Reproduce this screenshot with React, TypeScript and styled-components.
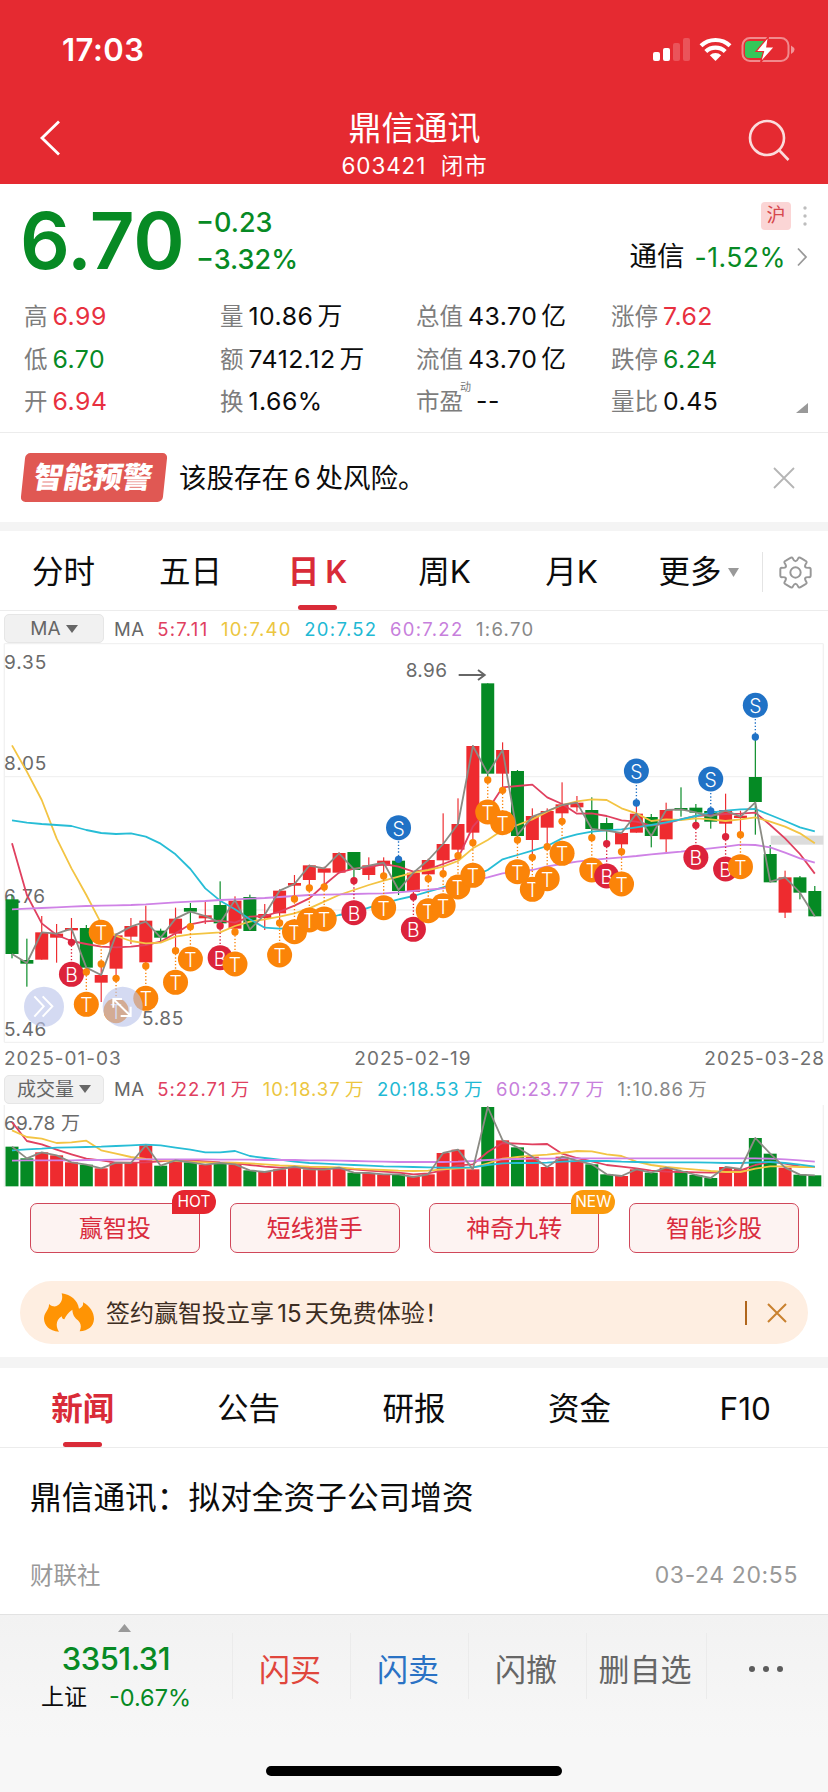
import React from 'react';
import styled, { createGlobalStyle } from 'styled-components';

const GlobalStyle = createGlobalStyle`
  * { box-sizing: border-box; }
  body {
    margin: 0;
    background: #fff;
    font-family: Inter, "Noto Sans CJK SC", sans-serif;
    color: #0c0c0c;
  }
`;

const RED = '#e52a31';
const GREEN = '#078a24';
const GREY = '#7d7d7d';

/* ---------- shared ---------- */

const Screen = styled.main`
  width: 828px;
  height: 1792px;
  display: flex;
  flex-direction: column;
  overflow: hidden;
  background: #fff;
`;

const Label = styled.span<{ $size: number; $color?: string; $weight?: number; $spacing?: number }>`
  font-size: ${p => p.$size}px;
  line-height: 1;
  color: ${p => p.$color ?? 'inherit'};
  font-weight: ${p => p.$weight ?? 400};
  letter-spacing: ${p => p.$spacing ?? 0}px;
  white-space: nowrap;
`;

const Band = styled.div<{ $height: number }>`
  height: ${p => p.$height}px;
  flex: none;
  background: #f4f4f4;
`;

/* ---------- header ---------- */

const Header = styled.header`
  height: 184px;
  flex: none;
  background: ${RED};
  color: #fff;
  display: flex;
  flex-direction: column;
`;

const StatusBar = styled.div`
  height: 99px;
  padding: 0 32px 0 62px;
  display: flex;
  justify-content: space-between;
  align-items: center;
`;

const TitleBar = styled.div`
  height: 85px;
  padding: 0 38px 0 39px;
  display: grid;
  grid-template-columns: 1fr auto 1fr;
`;

const TitleStack = styled.div`
  display: flex;
  flex-direction: column;
  align-items: center;
  gap: 10px;
  padding-top: 13px;
`;

const BackIcon = styled.svg`
  margin-top: 20px;
`;

const SearchIcon = styled.svg`
  margin-top: 20px;
  justify-self: end;
`;

/* ---------- quote ---------- */

const Quote = styled.section`
  height: 249px;
  flex: none;
  border-bottom: 1px solid #ececec;
  padding: 0 20px 0 22px;
`;

const PriceRow = styled.div`
  height: 110px;
  display: flex;
`;

const Price = styled.div`
  width: 174px;
  margin-left: -2px;
  padding-top: 18px;
  font-size: 78px;
  line-height: 78px;
  font-weight: 600;
  letter-spacing: -0.4px;
  color: ${GREEN};
  white-space: nowrap;
`;

const Changes = styled.div`
  display: flex;
  flex-direction: column;
  gap: 10px;
  padding: 25px 0 0 2px;
  flex: 1;
`;

const Sector = styled.div`
  display: flex;
  flex-direction: column;
  align-items: flex-end;
  gap: 12px;
  padding-top: 18px;
`;

const SectorTop = styled.div`
  display: flex;
  align-items: center;
  gap: 11px;
`;

const SectorLine = styled.div`
  display: flex;
  align-items: center;
  height: 30px;
  gap: 10px;
`;

const MarketBadge = styled.span`
  width: 30px;
  height: 28px;
  border-radius: 4px;
  background: #fbd5d5;
  color: #d6474c;
  font-size: 19px;
  line-height: 27px;
  text-align: center;
`;

const Stats = styled.div`
  display: grid;
  grid-template-columns: 196px 196px 195px 1fr;
  grid-auto-rows: 42.5px;
  padding: 1.5px 0 0 2px;
`;

const Stat = styled.div`
  display: flex;
  align-items: center;
  gap: 5px;
`;

const StatValue = styled.span<{ $color?: string }>`
  font-size: 24.8px;
  line-height: 1;
  letter-spacing: 0.5px;
  word-spacing: -3.5px;
  color: ${p => p.$color ?? 'inherit'};
  white-space: nowrap;
`;

const Superscript = styled.sup`
  font-size: 11px;
  line-height: 1;
  color: #777;
  align-self: flex-start;
  margin: 1px 0 0 -8px;
`;

const Corner = styled.svg`
  margin: 13px 0 0 auto;
`;

/* ---------- alert ---------- */

const Alert = styled.section`
  height: 89px;
  flex: none;
  padding: 0 33px 0 21px;
  display: flex;
  align-items: center;
`;

const AlertBadge = styled.div`
  width: 142px;
  height: 49px;
  margin: 0 14px 0 2px;
  border-radius: 5px;
  transform: skewX(-6deg);
  background: #e05853;
  color: #fff;
  display: flex;
  align-items: center;
  justify-content: center;
`;

const AlertName = styled.span`
  transform: skewX(-4deg);
  font-size: 29.5px;
  font-weight: 900;
  line-height: 1;
  padding-right: 1px;
`;

const AlertText = styled.p`
  margin: 0;
  padding-top: 2px;
  flex: 1;
  font-size: 27.5px;
  line-height: 1;
  word-spacing: -3px;
`;

/* ---------- chart tabs ---------- */

const PeriodTabs = styled.nav`
  height: 80px;
  flex: none;
  display: flex;
  border-bottom: 1px solid #ececec;
`;

const Period = styled.button<{ $active?: boolean }>`
  width: 127px;
  height: 79px;
  padding: 8px 0 0;
  border: 0;
  background: none;
  font: inherit;
  font-size: 31.5px;
  line-height: 1;
  font-weight: ${p => (p.$active ? 600 : 400)};
  color: ${p => (p.$active ? '#d92b38' : '#0c0c0c')};
  display: grid;
  grid-template-rows: 1fr 5px;
  justify-items: center;
  align-items: center;

  &::after {
    content: '';
    width: 39px;
    height: 5px;
    border-radius: 3px;
    background: ${p => (p.$active ? '#d92b38' : 'transparent')};
  }
`;

const PeriodName = styled.span`
  display: flex;
  align-items: center;
  gap: 6px;
  white-space: pre;
  word-spacing: -2px;
`;

const GearCell = styled.div`
  width: 66px;
  height: 40px;
  margin-top: 21px;
  border-left: 1px solid #e4e4e4;
  display: flex;
  align-items: center;
  justify-content: center;
`;

/* ---------- indicator rows ---------- */

const Indicators = styled.div<{ $pad: number }>`
  height: 32px;
  flex: none;
  padding: ${p => p.$pad}px 0 0 4px;
  display: flex;
  align-items: center;
`;

const Picker = styled.button`
  width: 100px;
  height: 29px;
  padding: 0;
  border: 1px solid #e6e6e6;
  border-radius: 5px;
  background: #f1f1f1;
  color: #666;
  font: inherit;
  font-size: 19px;
  line-height: 1;
  display: flex;
  align-items: center;
  justify-content: center;
  gap: 5px;
`;

const Legend = styled.div`
  margin-left: 10px;
  padding-top: 1px;
  display: flex;
  gap: 12.5px;
  word-spacing: -2px;
`;

const Dates = styled.div`
  height: 30px;
  flex: none;
  padding: 0 3px 0 4px;
  display: flex;
  justify-content: space-between;
  align-items: center;
`;

const Plot = styled.svg`
  display: block;
  flex: none;
`;

/* ---------- tools, banner ---------- */

const Tools = styled.div`
  height: 93px;
  flex: none;
  padding: 15px 29px 0 30px;
  display: grid;
  grid-template-columns: repeat(4, 170px);
  justify-content: space-between;
`;

const Tool = styled.button`
  position: relative;
  height: 50px;
  padding: 1px 0 0;
  border: 1.5px solid #d0475a;
  border-radius: 7px;
  background: #fdf3f2;
  color: #d92b3c;
  font: inherit;
  font-size: 24px;
  line-height: 1;
`;

const Tag = styled.span<{ $bg: string }>`
  position: absolute;
  top: -14px;
  right: -17px;
  width: 44px;
  height: 24px;
  border-radius: 12px 12px 12px 0;
  background: ${p => p.$bg};
  color: #fff;
  font-size: 15.5px;
  line-height: 24px;
  font-weight: 400;
  text-align: center;
`;

const Banner = styled.section`
  height: 63px;
  flex: none;
  margin: 0 20px 13px;
  padding: 0 21px 0 24px;
  border-radius: 32px;
  background: #feeee1;
  display: flex;
  align-items: center;
`;

const BannerText = styled.p`
  margin: 0 0 0 12px;
  padding-top: 2px;
  flex: 1;
  font-size: 24px;
  line-height: 1;
  color: #3d2d22;
  word-spacing: -3.5px;
`;

const BannerRule = styled.i`
  width: 2px;
  height: 24px;
  margin-right: 20px;
  background: #b0661c;
`;

/* ---------- news ---------- */

const NewsTabs = styled.nav`
  height: 80px;
  flex: none;
  display: grid;
  grid-template-columns: repeat(5, 1fr);
  border-bottom: 1px solid #ececec;
`;

const NewsTab = styled(Period)`
  width: 100%;
`;

const NewsItem = styled.article`
  height: 166px;
  flex: none;
  padding: 34px 30px 0 30px;
`;

const NewsTitle = styled.h2`
  margin: 0 0 50px;
  font-size: 31.7px;
  line-height: 1;
  font-weight: 400;
`;

const NewsMeta = styled.div`
  display: flex;
  justify-content: space-between;
  align-items: center;
`;

/* ---------- bottom bar ---------- */

const BottomBar = styled.footer`
  flex: 1;
  border-top: 1px solid #e2e2e2;
  background: linear-gradient(#f2f2f2, #f7f7f7 70%);
  display: flex;
  flex-direction: column;
  justify-content: space-between;
  align-items: center;
  padding-bottom: 16px;
`;

const Actions = styled.div`
  width: 100%;
  display: grid;
  grid-template-columns: 232px 118px 118px 118px 120px 1fr;
`;

const IndexCell = styled.div`
  display: flex;
  flex-direction: column;
  align-items: center;
  padding-top: 9px;
`;

const IndexLine = styled.div`
  display: flex;
  gap: 22px;
  align-items: center;
  margin-top: 12px;
`;

const Arrow = styled.svg`
  margin: 0 0 11px 16px;
`;

const Action = styled.button<{ $color: string }>`
  height: 66px;
  margin-top: 18px;
  padding: 6px 3px 0 0;
  border: 0;
  border-left: 1px solid #ebebeb;
  background: none;
  color: ${p => p.$color};
  font: inherit;
  font-size: 31px;
  line-height: 1;
  white-space: nowrap;
  display: flex;
  align-items: center;
  justify-content: center;
`;

const HomeIndicator = styled.div`
  width: 296px;
  height: 10px;
  border-radius: 5px;
  background: #000;
`;

/* ---------- chart data: plot units are a third of a pixel ---------- */

const STEP = 44.6;
const X0 = 36;
const px = (i: number) => X0 + STEP * i;
const UP = '#ee2b2f';
const DOWN = '#058a24';

/* [direction, body top, body bottom, wick top, wick bottom] */
const candles: [string, number, number, number, number][] = [
  ['g', 778, 942, 765, 955], ['g', 960, 971, 896, 1040], ['r', 877, 959, 828, 959], ['r', 881, 893, 852, 968],
  ['r', 864, 871, 834, 905], ['g', 864, 983, 855, 996], ['r', 1005, 1028, 972, 1086], ['r', 886, 986, 880, 1014],
  ['r', 858, 890, 834, 912], ['r', 842, 967, 797, 975], ['g', 872, 893, 866, 905], ['r', 836, 881, 803, 930],
  ['g', 804, 815, 789, 858], ['r', 826, 835, 782, 852], ['g', 795, 850, 724, 858], ['r', 782, 866, 769, 876],
  ['g', 771, 873, 764, 873], ['r', 822, 834, 792, 870], ['r', 752, 820, 748, 845], ['r', 729, 737, 705, 775],
  ['r', 676, 720, 674, 742], ['r', 685, 698, 680, 740], ['r', 639, 698, 637, 700], ['g', 636, 690, 636, 720],
  ['r', 676, 705, 652, 720], ['r', 662, 677, 652, 708], ['g', 662, 753, 655, 765], ['r', 698, 756, 694, 770],
  ['r', 660, 703, 656, 715], ['r', 612, 661, 520, 700], ['r', 552, 629, 475, 645], ['r', 318, 578, 316, 608],
  ['g', 130, 401, 130, 420], ['r', 330, 401, 307, 450], ['g', 393, 588, 390, 600], ['r', 528, 600, 505, 652],
  ['r', 513, 563, 505, 620], ['r', 493, 520, 427, 543], ['r', 488, 502, 468, 515], ['g', 510, 567, 472, 590],
  ['g', 549, 570, 533, 610], ['r', 579, 613, 579, 635], ['r', 521, 578, 490, 578], ['g', 531, 588, 522, 622],
  ['r', 510, 598, 488, 637], ['g', 504, 511, 442, 530], ['g', 503, 518, 492, 556], ['g', 513, 545, 505, 566],
  ['r', 510, 551, 461, 590], ['r', 527, 534, 512, 583], ['g', 411, 486, 292, 584], ['g', 642, 727, 615, 727],
  ['r', 712, 818, 692, 834], ['g', 712, 758, 708, 778], ['g', 753, 829, 738, 829],
];

const closeLine = [942, 969, 877, 881, 866, 983, 1005, 884, 860, 845, 893, 836, 815, 828, 848, 780, 868, 824, 752, 732,
  677, 685, 640, 688, 677, 668, 750, 698, 660, 612, 552, 318, 400, 330, 585, 530, 513, 495, 488, 567, 572, 579, 521,
  588, 510, 508, 517, 530, 512, 530, 487, 725, 712, 758, 829];
const ma5 = [610, 765, 850, 885, 903, 912, 920, 922, 920, 915, 905, 880, 853, 844, 842, 848, 830, 828, 815, 797, 775,
  735, 698, 686, 682, 672, 680, 695, 688, 672, 655, 560, 510, 442, 438, 434, 472, 492, 521, 520, 528, 541, 545, 557,
  550, 538, 528, 525, 522, 521, 518, 555, 595, 642, 701];
const ma10 = [316, 395, 480, 595, 685, 765, 850, 888, 903, 910, 908, 890, 883, 880, 877, 858, 845, 838, 830, 820, 805,
  785, 765, 750, 735, 722, 710, 698, 690, 680, 663, 625, 600, 570, 555, 538, 515, 495, 484, 478, 480, 505, 520, 543,
  538, 540, 535, 538, 543, 538, 532, 545, 560, 580, 610];
const ma20 = [541, 548, 552, 555, 558, 570, 579, 582, 580, 590, 611, 643, 687, 745, 782, 808, 838, 863, 866, 864, 855,
  837, 825, 818, 803, 790, 778, 768, 755, 742, 728, 710, 690, 658, 645, 632, 618, 595, 583, 575, 571, 568, 562, 555,
  547, 538, 528, 518, 512, 508, 507, 525, 543, 562, 574];
const ma60 = [808, 806, 804, 802, 800, 798, 797, 796, 795, 793, 790, 787, 785, 783, 780, 778, 776, 774, 771, 768, 765,
  764, 763, 762, 761, 760, 757, 753, 749, 745, 734, 722, 712, 700, 695, 690, 679, 672, 665, 660, 656, 652, 648, 643,
  639, 635, 630, 625, 620, 614, 615, 622, 638, 655, 668];

/* [candle index, dot y, circle y, letter] */
const marks: [number, number, number, string][] = [
  [4, 907, 1003, 'B'], [5, 996, 1093, 'T'], [6, 972, 877, 'T'], [7, 1015, 1112, 'T'], [9, 978, 1075, 'T'],
  [11, 932, 1027, 'T'], [12, 860, 957, 'T'], [14, 858, 953, 'B'], [15, 876, 972, 'T'], [18, 849, 945, 'T'],
  [19, 777, 875, 'T'], [20, 744, 840, 'T'], [21, 741, 837, 'T'], [23, 722, 818, 'B'], [25, 708, 803, 'T'],
  [26, 658, 563, 'S'], [27, 771, 868, 'B'], [28, 716, 812, 'T'], [29, 701, 797, 'T'], [30, 647, 741, 'T'],
  [31, 608, 706, 'T'], [32, 420, 516, 'T'], [33, 451, 548, 'T'], [34, 600, 695, 'T'], [35, 652, 748, 'T'],
  [36, 620, 716, 'T'], [37, 544, 640, 'T'], [39, 593, 690, 'T'], [40, 611, 708, 'B'], [41, 635, 732, 'T'],
  [42, 489, 393, 'S'], [46, 556, 652, 'B'], [47, 513, 417, 'S'], [48, 590, 687, 'B'], [49, 584, 680, 'T'],
  [50, 291, 196, 'S'],
];
const markColor: Record<string, string> = { B: '#dc233b', T: '#fb8408', S: '#2072c6' };

const volTops = [319, 354, 336, 345, 366, 373, 384, 367, 368, 315, 376, 360, 366, 373, 368, 372, 390, 395, 387, 379,
  387, 388, 382, 397, 398, 402, 402, 410, 402, 338, 328, 387, 200, 300, 321, 349, 380, 349, 361, 372, 402, 407, 387,
  397, 382, 392, 404, 413, 380, 386, 293, 340, 382, 403, 405];
const volColors = 'ggrrrgrrrrgrgrgrgrrrrrrgrrgrrrrrgrgrrrrggrrgrgggrrggrgg';
const vol5 = [245, 302, 312, 328, 342, 355, 360, 367, 367, 366, 363, 359, 360, 363, 366, 368, 374, 379, 382, 381, 383,
  385, 384, 387, 391, 394, 397, 402, 399, 390, 375, 372, 335, 308, 310, 312, 311, 340, 353, 363, 374, 379, 384, 391,
  394, 395, 396, 397, 395, 390, 374, 364, 370, 378, 380];
const vol10 = [270, 290, 295, 308, 306, 301, 330, 340, 350, 356, 360, 362, 364, 366, 368, 367, 369, 372, 375, 377, 379,
  380, 381, 385, 387, 389, 391, 392, 391, 387, 384, 382, 369, 355, 350, 346, 343, 338, 332, 333, 342, 347, 364, 374,
  380, 384, 388, 392, 395, 395, 385, 378, 378, 380, 380];
const vol20 = [330, 327, 325, 322, 321, 320, 319, 317, 315, 313, 315, 322, 328, 336, 336, 332, 347, 353, 358, 364, 368,
  370, 372, 374, 376, 378, 379, 380, 381, 382, 382, 381, 374, 369, 368, 368, 367, 364, 362, 362, 362, 364, 365, 366,
  366, 366, 366, 367, 368, 368, 366, 365, 368, 373, 379];
const vol60 = [361, 360, 360, 360, 360, 359, 359, 358, 357, 357, 357, 357, 357, 357, 358, 358, 358, 359, 359, 359, 360,
  360, 361, 362, 363, 364, 365, 365, 365, 365, 364, 362, 359, 357, 356, 355, 355, 354, 354, 354, 354, 354, 354, 354,
  354, 354, 354, 354, 354, 354, 354, 355, 357, 360, 364];

const toPoints = (ys: number[]) => ys.map((y, i) => `${px(i)},${y}`).join(' ');

const Line = ({ ys, color }: { ys: number[]; color: string }) => (
  <polyline points={toPoints(ys)} fill="none" stroke={color} strokeWidth={5.4} strokeLinejoin="round" />
);

const PINK = '#e0405f';
const YELLOW = '#f3c443';
const CYAN = '#27bdd6';
const VIOLET = '#cf82e6';

const AxisText = ({ x, y, w, children }: { x: number; y: number; w: number; children: string }) => (
  <text x={x} y={y} textLength={w} fontSize={57} fill="#6a6a6a" fontFamily='Inter, "Noto Sans CJK SC", sans-serif'>
    {children}
  </text>
);

const CandleChart = () => (
  <Plot width={828} height={400} viewBox="0 9 2484 1200">
    <g stroke="#f1f1f1" strokeWidth={4}>
      <path d="M13 11H2470M13 410H2470M13 810H2470M13 1207H2470M13 11V1207M2470 11V1207" fill="none" />
    </g>
    <rect x={2312} y={587} width={158} height={27} fill="#dcdcdc" />
    <AxisText x={12} y={88} w={127}>9.35</AxisText>
    <AxisText x={12} y={390} w={127}>8.05</AxisText>
    <AxisText x={12} y={790} w={123}>6.76</AxisText>
    <AxisText x={12} y={1188} w={127}>5.46</AxisText>
    {candles.map(([dir, top, bottom, high, low], i) => (
      <g key={i} fill={dir === 'g' ? DOWN : UP}>
        <rect x={px(i) - 1.75} y={high} width={3.5} height={low - high} />
        <rect x={px(i) - 19.5} y={top} width={39} height={bottom - top} />
      </g>
    ))}
    <Line ys={ma5} color={PINK} />
    <Line ys={ma10} color={YELLOW} />
    <Line ys={ma20} color={CYAN} />
    <Line ys={ma60} color={VIOLET} />
    <Line ys={closeLine} color="#8b8b84" />
    {marks.map(([i, dot, cy, letter]) => (
      <g key={i} fill={markColor[letter]}>
        <path d={`M${px(i)} ${dot}V${cy}`} stroke={markColor[letter]} strokeWidth={4} strokeDasharray="4 6" />
        <circle cx={px(i)} cy={dot} r={11} />
        <circle cx={px(i)} cy={cy} r={37.5} />
        <text
          x={px(i)}
          y={cy + 24}
          textAnchor="middle"
          fontSize={58}
          fontWeight={300}
          fill="#fff"
          fontFamily="Inter, sans-serif"
        >
          {letter}
        </text>
      </g>
    ))}
    <AxisText x={1217} y={111} w={124}>8.96</AxisText>
    <path d="M1376 105H1454M1434 90L1454 105L1434 120" fill="none" stroke="#666" strokeWidth={6} />
    <AxisText x={426} y={1154} w={124}>5.85</AxisText>
    <g fill="#b9c4ea" fillOpacity={0.62}>
      <circle cx={132} cy={1100} r={60} />
      <circle cx={368} cy={1100} r={60} />
    </g>
    <g fill="none" stroke="#fff" strokeWidth={6}>
      <path d="M103 1069L131 1099L103 1130M128 1069L157 1099L128 1130" />
      <path d="M340 1077L392 1128M340 1103V1077H366M362 1128H392V1100" />
    </g>
  </Plot>
);

const VolumeChart = () => (
  <Plot width={828} height={83} viewBox="0 194 2484 249">
    <path d="M13 194V440M2470 194V440" stroke="#f1f1f1" strokeWidth={4} />
    <AxisText x={12} y={268} w={228}>69.78 万</AxisText>
    {volTops.map((top, i) => (
      <rect key={i} x={px(i) - 19.5} y={top} width={39} height={438 - top} fill={volColors[i] === 'g' ? DOWN : UP} />
    ))}
    <Line ys={vol5} color={PINK} />
    <Line ys={vol10} color={YELLOW} />
    <Line ys={vol20} color={CYAN} />
    <Line ys={vol60} color={VIOLET} />
    <Line ys={volTops} color="#8b8b84" />
  </Plot>
);

/* ---------- icons ---------- */

const Caret = ({ color, w = 12, h = 8 }: { color: string; w?: number; h?: number }) => (
  <svg width={w} height={h} viewBox="0 0 12 8" preserveAspectRatio="none">
    <path d="M0 0H12L6 8Z" fill={color} />
  </svg>
);

const Cross = ({ size, color, stroke }: { size: number; color: string; stroke: number }) => (
  <svg width={size} height={size} viewBox={`0 0 ${size} ${size}`}>
    <path d={`M1 1L${size - 1} ${size - 1}M${size - 1} 1L1 ${size - 1}`} stroke={color} strokeWidth={stroke} />
  </svg>
);

const polar = (r: number, deg: number) => {
  const a = (deg * Math.PI) / 180;
  return `${(16 + r * Math.cos(a)).toFixed(2)} ${(16 + r * Math.sin(a)).toFixed(2)}`;
};
const gearPath =
  [0, 60, 120, 180, 240, 300]
    .map((a, k) =>
      `${k === 0 ? 'M' : 'L'}${polar(14, a - 19)}Q${polar(15.6, a - 17)} ${polar(14.9, a - 9)}L${polar(14.9, a + 9)}` +
      `Q${polar(15.6, a + 17)} ${polar(14, a + 19)}Q${polar(8, a + 30)} ${polar(14, a + 41)}`)
    .join('') + 'Z';

const Gear = () => (
  <svg width={33} height={33} viewBox="0 0 32 32" fill="none" stroke="#989898" strokeWidth={1.9} strokeLinejoin="round">
    <path d={gearPath} />
    <circle cx={16} cy={16} r={5} />
  </svg>
);

const Flame = () => (
  <svg width={50} height={39} viewBox="75 52 150 117">
    <path
      fill="#ff9404"
      d="M120 168C88 166 74 146 75 126C77 109 91 103 90 85C98 92 105 93 111 92C126 85 133 71 128 53C156 57 176 74 180 99C189 96 194 89 192 80C213 92 225 110 225 130C224 152 208 165 182 167C190 149 183 138 172 130C166 123 161 117 160 102C147 110 140 122 136 131C131 131 129 127 128 122C111 134 109 150 120 168Z"
    />
  </svg>
);

const StatusIcons = () => (
  <svg width={144} height={28} viewBox="652 36 144 28">
    <g fill="#fff">
      <rect x={653} y={52} width={7} height={9} rx={2} />
      <rect x={663} y={48} width={7} height={13} rx={2} />
      <rect x={673} y={43} width={7} height={18} rx={2} opacity={0.2} />
      <rect x={683} y={38} width={7} height={23} rx={2} opacity={0.2} />
      <path d="M715.500 61L709.800 55.200A8.200 8.200 0 0 1 721.200 55.200Z" />
    </g>
    <g fill="none" stroke="#fff" strokeWidth={4.2}>
      <path d="M705.800 51.600A14 14 0 0 1 725.200 51.600" />
      <path d="M701 45.800A21 21 0 0 1 730 45.800" />
    </g>
    <rect x={742.5} y={38} width={46} height={23} rx={7.5} fill="none" stroke="#fff" strokeOpacity={0.45} strokeWidth={2} />
    <path d="M791 45.500V54Q794.500 52 794.500 49.700Q794.500 47.500 791 45.500Z" fill="#fff" fillOpacity={0.5} />
    <path d="M749 41H764V58H749Q745 58 745 54V45Q745 41 749 41Z" fill="#35c759" />
    <path d="M768.500 36.500L756 51.500H763.500L760.500 62.500L774.500 47H766.800Z" fill="#fff" stroke={RED} strokeWidth={1.2} />
  </svg>
);

/* ---------- page ---------- */

const stats: { label: string; value: string; color?: string; sup?: string }[] = [
  { label: '高', value: '6.99', color: '#e8303f' },
  { label: '量', value: '10.86 万' },
  { label: '总值', value: '43.70 亿' },
  { label: '涨停', value: '7.62', color: '#e8303f' },
  { label: '低', value: '6.70', color: GREEN },
  { label: '额', value: '7412.12 万' },
  { label: '流值', value: '43.70 亿' },
  { label: '跌停', value: '6.24', color: GREEN },
  { label: '开', value: '6.94', color: '#e8303f' },
  { label: '换', value: '1.66%' },
  { label: '市盈', value: '--', sup: '动' },
  { label: '量比', value: '0.45' },
];

const priceLegend: [string, string][] = [
  ['MA', '#666'], ['5:7.11', PINK], ['10:7.40', '#ecc63f'], ['20:7.52', '#1fb9d4'], ['60:7.22', '#c77fdc'], ['1:6.70', '#888'],
];
const volumeLegend: [string, string][] = [
  ['MA', '#666'], ['5:22.71 万', PINK], ['10:18.37 万', '#ecc63f'], ['20:18.53 万', '#1fb9d4'],
  ['60:23.77 万', '#c77fdc'], ['1:10.86 万', '#888'],
];

const LegendItems = ({ items, spacing }: { items: [string, string][]; spacing: number }) => (
  <Legend>
    {items.map(([text, color], i) => (
      <Label key={text} $size={18.5} $color={color} $spacing={i === 0 ? 0.6 : spacing}>{text}</Label>
    ))}
  </Legend>
);

export default function App() {
  return (
    <Screen>
      <GlobalStyle />
      <Header>
        <StatusBar>
          <Label $size={31} $weight={600} $spacing={0.5}>17:03</Label>
          <StatusIcons />
        </StatusBar>
        <TitleBar>
          <BackIcon width={22} height={38} viewBox="0 0 22 38" fill="none" stroke="#fff" strokeWidth={2.8}>
            <path d="M20 2.500L3 19L20 35.500" />
          </BackIcon>
          <TitleStack>
            <Label $size={33}>鼎信通讯</Label>
            <Label $size={22.5} $spacing={0.9}>603421&nbsp; 闭市</Label>
          </TitleStack>
          <SearchIcon width={42} height={42} viewBox="0 0 42 42" fill="none" stroke="#fbdcdc" strokeWidth={2.6}>
            <circle cx={19} cy={19} r={17} />
            <path d="M31 31L40.500 41" />
          </SearchIcon>
        </TitleBar>
      </Header>

      <Quote>
        <PriceRow>
          <Price>6.70</Price>
          <Changes>
            <Label $size={27} $weight={500} $color={GREEN}>−0.23</Label>
            <Label $size={27} $weight={500} $color={GREEN}>−3.32%</Label>
          </Changes>
          <Sector>
            <SectorTop>
              <MarketBadge>沪</MarketBadge>
              <svg width={6} height={20} viewBox="0 0 6 20" fill="#bdbdbd">
                <circle cx={3} cy={2} r={1.7} />
                <circle cx={3} cy={10} r={1.7} />
                <circle cx={3} cy={18} r={1.7} />
              </svg>
            </SectorTop>
            <SectorLine>
              <Label $size={27.5}>通信</Label>
              <Label $size={26.5} $color={GREEN} $spacing={0.5}>-1.52%</Label>
              <svg width={12} height={20} viewBox="0 0 12 20" fill="none" stroke="#999" strokeWidth={1.8}>
                <path d="M2 1.500L10 10L2 18.500" />
              </svg>
            </SectorLine>
          </Sector>
        </PriceRow>
        <Stats>
          {stats.map((s, i) => (
            <Stat key={i}>
              <Label $size={23.5} $color={GREY}>{s.label}</Label>
              {s.sup && <Superscript>{s.sup}</Superscript>}
              <StatValue $color={s.color}>{s.value}</StatValue>
              {i === stats.length - 1 && (
                <Corner width={12} height={10} viewBox="0 0 12 10"><path d="M12 0V10H0Z" fill="#999" /></Corner>
              )}
            </Stat>
          ))}
        </Stats>
      </Quote>

      <Alert>
        <AlertBadge><AlertName>智能预警</AlertName></AlertBadge>
        <AlertText>该股存在 6 处风险。</AlertText>
        <Cross size={22} color="#b5b5b5" stroke={1.8} />
      </Alert>
      <Band $height={9} />

      <PeriodTabs>
        <Period><PeriodName>分时</PeriodName></Period>
        <Period><PeriodName>五日</PeriodName></Period>
        <Period $active><PeriodName>日 K</PeriodName></Period>
        <Period><PeriodName>周K</PeriodName></Period>
        <Period><PeriodName>月K</PeriodName></Period>
        <Period><PeriodName>更多<Caret color="#999" w={11} h={9} /></PeriodName></Period>
        <GearCell><Gear /></GearCell>
      </PeriodTabs>

      <Indicators $pad={3}>
        <Picker>MA<Caret color="#666" /></Picker>
        <LegendItems items={priceLegend} spacing={1.3} />
      </Indicators>
      <CandleChart />
      <Dates>
        <Label $size={19} $color="#707070" $spacing={1}>2025-01-03</Label>
        <Label $size={19} $color="#707070" $spacing={1}>2025-02-19</Label>
        <Label $size={19} $color="#707070" $spacing={1}>2025-03-28</Label>
      </Dates>
      <Indicators $pad={0}>
        <Picker>成交量<Caret color="#666" /></Picker>
        <LegendItems items={volumeLegend} spacing={1.02} />
      </Indicators>
      <VolumeChart />

      <Tools>
        <Tool>赢智投<Tag $bg="#e5262f">HOT</Tag></Tool>
        <Tool>短线猎手</Tool>
        <Tool>神奇九转<Tag $bg="#fb9a0c">NEW</Tag></Tool>
        <Tool>智能诊股</Tool>
      </Tools>

      <Banner>
        <Flame />
        <BannerText>签约赢智投立享 15 天免费体验！</BannerText>
        <BannerRule />
        <Cross size={20} color="#c9812f" stroke={2} />
      </Banner>
      <Band $height={11} />

      <NewsTabs>
        <NewsTab $active><PeriodName>新闻</PeriodName></NewsTab>
        <NewsTab><PeriodName>公告</PeriodName></NewsTab>
        <NewsTab><PeriodName>研报</PeriodName></NewsTab>
        <NewsTab><PeriodName>资金</PeriodName></NewsTab>
        <NewsTab><PeriodName>F10</PeriodName></NewsTab>
      </NewsTabs>
      <NewsItem>
        <NewsTitle>鼎信通讯：拟对全资子公司增资</NewsTitle>
        <NewsMeta>
          <Label $size={23.5} $color="#999">财联社</Label>
          <Label $size={23} $color="#999" $spacing={0.6}>03-24 20:55</Label>
        </NewsMeta>
      </NewsItem>

      <BottomBar>
        <Actions>
          <IndexCell>
            <Arrow width={13} height={8} viewBox="0 0 13 8"><path d="M6.500 0L13 8H0Z" fill="#999" /></Arrow>
            <Label $size={31} $weight={500} $color={GREEN} $spacing={-0.5}>3351.31</Label>
            <IndexLine>
              <Label $size={23}>上证</Label>
              <Label $size={23.5} $color={GREEN}>-0.67%</Label>
            </IndexLine>
          </IndexCell>
          <Action $color="#e0463c">闪买</Action>
          <Action $color="#2a72c4">闪卖</Action>
          <Action $color="#666">闪撤</Action>
          <Action $color="#666">删自选</Action>
          <Action $color="#666">
            <svg width={36} height={8} viewBox="0 0 36 8" fill="#5c5c5c">
              <circle cx={4} cy={4} r={3} />
              <circle cx={18} cy={4} r={3} />
              <circle cx={32} cy={4} r={3} />
            </svg>
          </Action>
        </Actions>
        <HomeIndicator />
      </BottomBar>
    </Screen>
  );
}
